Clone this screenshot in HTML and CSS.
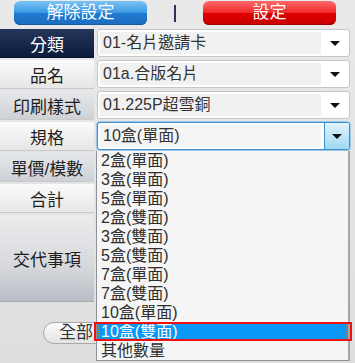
FILE: index.html
```html
<!DOCTYPE html>
<html lang="zh-Hant">
<head>
    <meta charset="UTF-8">
    <meta name="viewport" content="width=device-width, initial-scale=1.0">
    <title>規格設定</title>
    <link rel="stylesheet" href="styles.css">
</head>
<body>
    <div class="page">
        <div class="actions">
            <button class="btn btn-blue">解除設定</button>
            <span class="sep"></span>
            <button class="btn btn-red">設定</button>
        </div>

        <div class="form">
            <div class="row">
                <div class="label label-navy">分類</div>
                <div class="field">
                    <div class="select"><span class="val">01-名片邀請卡</span><span class="arrow"></span></div>
                </div>
            </div>
            <div class="row">
                <div class="label label-light">品名</div>
                <div class="field">
                    <div class="select"><span class="val">01a.合版名片</span><span class="arrow"></span></div>
                </div>
            </div>
            <div class="row">
                <div class="label label-gray">印刷樣式</div>
                <div class="field">
                    <div class="select"><span class="val">01.225P超雪銅</span><span class="arrow"></span></div>
                </div>
            </div>
            <div class="row">
                <div class="label label-light">規格</div>
                <div class="field">
                    <div class="select focus"><span class="val">10盒(單面)</span><span class="arrow"></span></div>
                    <ul class="options">
                        <li>2盒(單面)</li>
                        <li>3盒(單面)</li>
                        <li>5盒(單面)</li>
                        <li>2盒(雙面)</li>
                        <li>3盒(雙面)</li>
                        <li>5盒(雙面)</li>
                        <li>7盒(單面)</li>
                        <li>7盒(雙面)</li>
                        <li>10盒(單面)</li>
                        <li class="selected">10盒(雙面)</li>
                        <li>其他數量</li>
                    </ul>
                </div>
            </div>
            <div class="row">
                <div class="label label-gray">單價/模數</div>
                <div class="field"></div>
            </div>
            <div class="row">
                <div class="label label-light">合計</div>
                <div class="field"></div>
            </div>
            <div class="row row-tall">
                <div class="label label-note">交代事項</div>
                <div class="field"></div>
            </div>
        </div>

        <div class="footer">
            <button class="btn-all">全部</button>
        </div>
    </div>
</body>
</html>
```

FILE: styles.css
```css
body {
    margin: 0;
    font-family: 'Liberation Sans', 'Noto Sans CJK TC', sans-serif;
    background: #e4e4e4;
}

.page {
    width: 355px;
    height: 363px;
    overflow: hidden;
    background: linear-gradient(#e9e9e9, #dedede);
}

.actions {
    display: flex;
    align-items: flex-start;
    height: 29px;
    padding-left: 14px;
    box-sizing: border-box;
    padding-top: 1px;
}

.btn {
    width: 133px;
    height: 24px;
    border: none;
    border-radius: 6px;
    color: white;
    font-family: inherit;
    font-size: 17px;
    line-height: 24px;
    padding: 0;
}

.btn-blue {
    background: linear-gradient(#7cc4f4 0%, #3a98e4 48%, #1f7ad0 52%, #1b6cc0 100%);
    box-shadow: inset 0 -1px 0 #155a9e;
}

.btn-red {
    background: linear-gradient(#ff6a6a 0%, #f02a2a 48%, #e00000 52%, #c80000 100%);
    box-shadow: inset 0 -1px 0 #9a0000;
}

.sep {
    width: 2px;
    height: 17px;
    margin: 4px 27px 0;
    background: #3c2c5c;
}

.form {
    display: flex;
    flex-direction: column;
    gap: 2px;
}

.row {
    display: flex;
    height: 29px;
    gap: 3px;
}

.row-tall {
    height: 87px;
}

.label {
    width: 94px;
    flex-shrink: 0;
    box-sizing: border-box;
    display: flex;
    justify-content: center;
    align-items: center;
    font-size: 17px;
    color: #1e1e1e;
    border-bottom: 1px solid #c9c9c9;
}

.label-navy {
    background: linear-gradient(#24365a, #0b1b3c);
    color: white;
    border-bottom-color: #07122a;
}

.label-light {
    background: linear-gradient(#fbfbfb, #e6e6e6);
}

.label-gray {
    background: linear-gradient(#e6e8eb, #cdd1d6);
}

.label-note {
    background: linear-gradient(#ececee 0%, #d6d8dc 60%, #b9bdc5 100%);
    border-bottom-color: #a8adb6;
}

.field {
    position: relative;
    width: 253px;
}

.select {
    display: flex;
    align-items: stretch;
    height: 28px;
    box-sizing: border-box;
    border: 1px solid #c6c6c6;
    border-radius: 3px;
    background: white;
    padding: 2px 0 2px 2px;
}

.val {
    flex: 1;
    background: #f1f1f1;
    padding-left: 3px;
    font-size: 16px;
    line-height: 22px;
    color: #333;
}

.arrow {
    width: 28px;
    position: relative;
}

.arrow::after {
    content: '';
    position: absolute;
    left: 9px;
    top: 9px;
    border-left: 5px solid transparent;
    border-right: 5px solid transparent;
    border-top: 5px solid #111;
}

.select.focus {
    border-color: #3d8fcf;
    box-shadow: 0 0 0 1px #9cc8ea;
    padding-right: 0;
}

.select.focus .val {
    background: #f4f4f4;
}

.select.focus .arrow {
    width: 24px;
    margin: -2px 0 -2px 3px;
    border-left: 1px solid #3d8fcf;
    border-radius: 0 2px 2px 0;
    background: linear-gradient(#e2f4fc, #9fd8f3);
}

.select.focus .arrow::after {
    left: 7px;
    top: 11px;
}

.options {
    position: absolute;
    top: 100%;
    left: -1px;
    width: 254px;
    margin: 0;
    padding: 0;
    list-style: none;
    box-sizing: border-box;
    background: #f5f5f5;
    border: 1px solid #8e9298;
    border-top: none;
    border-right: 2px solid #a3a7ad;
    z-index: 5;
}

.options li {
    position: relative;
    height: 19px;
    line-height: 19px;
    padding-left: 4px;
    font-size: 16px;
    color: #2e2e2e;
}

.options li.selected {
    background: #0a98f6;
    color: white;
}

.options li.selected::before {
    content: '';
    position: absolute;
    inset: 1px;
    border: 1px dotted #c0883a;
}

.options li.selected::after {
    content: '';
    position: absolute;
    top: 0;
    bottom: 0;
    left: -3px;
    right: -4px;
    border: 2px solid #ee1111;
}

.footer {
    padding: 20px 0 0 43px;
}

.btn-all {
    width: 90px;
    height: 22px;
    border: 1px solid #a9a9a9;
    border-radius: 11px;
    background: linear-gradient(#fdfdfd, #e2e2e2);
    font-family: inherit;
    font-size: 17px;
    line-height: 20px;
    padding: 0 0 0 15px;
    text-align: left;
    color: #333;
}
```
